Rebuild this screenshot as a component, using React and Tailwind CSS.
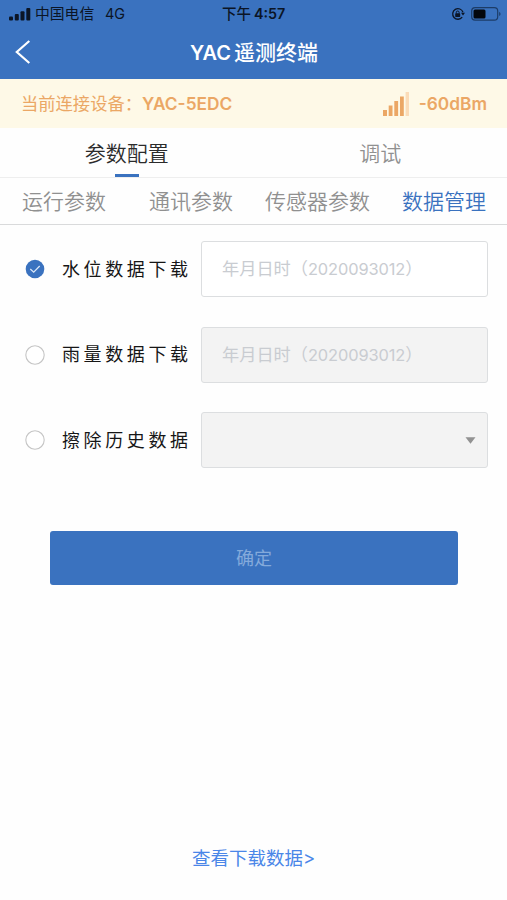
const tabs = [
  { label: '参数配置', active: true },
  { label: '调试', active: false },
];

const subTabs = ['运行参数', '通讯参数', '传感器参数', '数据管理'];

function StatusBar() {
  return (
    <div className="flex h-7 items-center pl-[9px] pr-[6px] text-[#0b1526]">
      <svg width="22" height="13" viewBox="0 0 22 13" fill="currentColor">
        <rect x="0" y="8.5" width="4" height="4" rx="1" />
        <rect x="5.8" y="6" width="4" height="6.5" rx="1" />
        <rect x="11.5" y="3.2" width="4" height="9.3" rx="1" />
        <rect x="17.3" y="0" width="4" height="12.5" rx="1" />
      </svg>
      <span className="ml-1 w-[60px] text-[14.8px] leading-7">中国电信</span>
      <span className="ml-[10px] w-5 text-[14.4px] leading-7">4G</span>
      <span className="ml-[97px] whitespace-nowrap text-[14.5px] font-medium leading-7">
        下午<span className="ml-[3px] text-[14.3px] font-semibold">4:57</span>
      </span>
      <div className="ml-auto flex items-center gap-[6px]">
        <svg width="14" height="14" viewBox="0 0 14 14" fill="none" stroke="currentColor">
          <path d="M11.2 10.2A5.3 5.3 0 1 1 12 5.2" strokeWidth="1.3" />
          <path d="M10 5.7h4l-2 2.8z" fill="currentColor" stroke="none" />
          <rect x="4.2" y="6.3" width="5" height="3.6" rx="0.6" fill="currentColor" stroke="none" />
          <path d="M5.3 6.5V5.4a1.4 1.4 0 0 1 2.8 0v1.1" strokeWidth="1" />
        </svg>
        <svg width="30" height="14" viewBox="0 0 30 14">
          <rect x="0.7" y="0.6" width="26" height="12.6" rx="3.4" fill="none" stroke="#1c3c68" strokeWidth="1.2" />
          <rect x="2.5" y="2.4" width="12" height="9" rx="1.5" fill="#03070d" />
          <path d="M28.2 4.7c1.8.8 1.8 3.6 0 4.4z" fill="#1c3c68" />
        </svg>
      </div>
    </div>
  );
}

function SignalIcon() {
  return (
    <svg width="27" height="24" viewBox="0 0 27 24" fill="#eba765">
      <rect x="0" y="18" width="4" height="6" />
      <rect x="5.7" y="13.5" width="3.8" height="10.5" />
      <rect x="11.3" y="9" width="3.8" height="15" />
      <rect x="17" y="4.5" width="3.8" height="19.5" />
      <rect x="22.6" y="0" width="3.4" height="24" fill="#fbdcb8" />
    </svg>
  );
}

function Radio({ checked }) {
  return (
    <svg width="20" height="20" viewBox="0 0 20 20" fill="none" className="shrink-0">
      {checked ? (
        <>
          <circle cx="10" cy="10" r="9.3" fill="#3a72bf" />
          <path d="M5.3 10l3.4 3.2 6-6.2" stroke="#dce8f8" strokeWidth="1.2" />
        </>
      ) : (
        <circle cx="10" cy="10" r="9.2" fill="#fff" stroke="#c5c5c5" strokeWidth="1.1" />
      )}
    </svg>
  );
}

function Row({ label, checked, placeholder, select }) {
  return (
    <div className="flex h-14 items-center">
      <Radio checked={checked} />
      <span className="ml-[17px] w-[139px] shrink-0 whitespace-nowrap text-[18px] tracking-[3.6px] text-[#161616]">{label}</span>
      <div
        className={`flex h-14 flex-1 items-center rounded-[3px] border border-[#dcdee0] pl-5 pr-[11px] ${checked ? 'bg-white' : 'bg-[#f3f3f3]'}`}
      >
        {placeholder && (
          <span className="whitespace-nowrap text-[17.2px] text-[#c9ccd1]">
            年月日时（<span className="text-[16.4px] tracking-[-0.1px]">{placeholder}</span>）
          </span>
        )}
        {select && (
          <svg width="11" height="7" viewBox="0 0 11 7" className="ml-auto">
            <path d="M0.5 0.3h10L5.5 6.7z" fill="#929292" />
          </svg>
        )}
      </div>
    </div>
  );
}

export default function App() {
  return (
    <div className="flex h-[900px] w-[507px] flex-col overflow-hidden bg-[#fefefe] font-[Inter,'Noto_Sans_CJK_SC',sans-serif]">
      <header className="h-[79px] shrink-0 bg-[#3a72bf]">
        <StatusBar />
        <div className="flex h-[49px] items-center px-[15px] text-white">
          <svg width="16" height="24" viewBox="0 0 16 24" fill="none" stroke="currentColor" strokeWidth="2.2" className="-mt-px">
            <path d="M14.3 1L1.8 12l12.5 11" />
          </svg>
          <h1 className="flex flex-1 justify-center gap-[3px] pr-[15px] text-[21px] font-medium">
            <span className="text-[20px] font-semibold leading-8">YAC</span>
            <span className="leading-8">遥测终端</span>
          </h1>
        </div>
      </header>

      <div className="flex h-[49px] shrink-0 items-center bg-[#fef9e7] pl-[21px] pr-[20px] text-[17.3px] text-[#eba765]">
        <span>当前连接设备：</span>
        <span className="font-semibold">YAC-5EDC</span>
        <div className="ml-auto flex items-center gap-[9px]">
          <SignalIcon />
          <span className="font-semibold">-60dBm</span>
        </div>
      </div>

      <nav className="flex h-[50px] shrink-0 border-b border-[#eeeeee] text-[21px] font-[350]">
        {tabs.map((tab) => (
          <div key={tab.label} className="flex flex-1 flex-col items-center">
            <span className={`h-[46px] leading-[51px] ${tab.active ? 'text-[#2b2b2b]' : 'text-[#909090]'}`}>{tab.label}</span>
            {tab.active && <span className="h-[3px] w-6 shrink-0 bg-[#3a72bf]" />}
          </div>
        ))}
      </nav>

      <nav className="flex h-[47px] shrink-0 items-center border-b border-[#d9dadb] pl-[22px] pt-px text-[21px] font-[350]">
        {subTabs.map((name) => (
          <span
            key={name}
            className="mr-[32px] whitespace-nowrap text-[#909090] first:mr-[43px] last:mr-0 last:text-[#3a72bf]"
          >
            {name}
          </span>
        ))}
      </nav>

      <main className="flex flex-1 flex-col pt-4">
        <div className="flex flex-col gap-[29.5px] pl-[25px] pr-[19px]">
          <Row label="水位数据下载" placeholder="2020093012" checked />
          <Row label="雨量数据下载" placeholder="2020093012" />
          <Row label="擦除历史数据" select />
        </div>
        <button className="ml-[50px] mt-[63px] h-[54px] w-[408px] rounded-[3px] bg-[#3a72bf] text-[18px] text-[#84aadb]">确定</button>
        <a className="mb-[28px] mt-auto text-center text-[18.5px] leading-7 text-[#4a86e8]">查看下载数据&gt;</a>
      </main>
    </div>
  );
}
